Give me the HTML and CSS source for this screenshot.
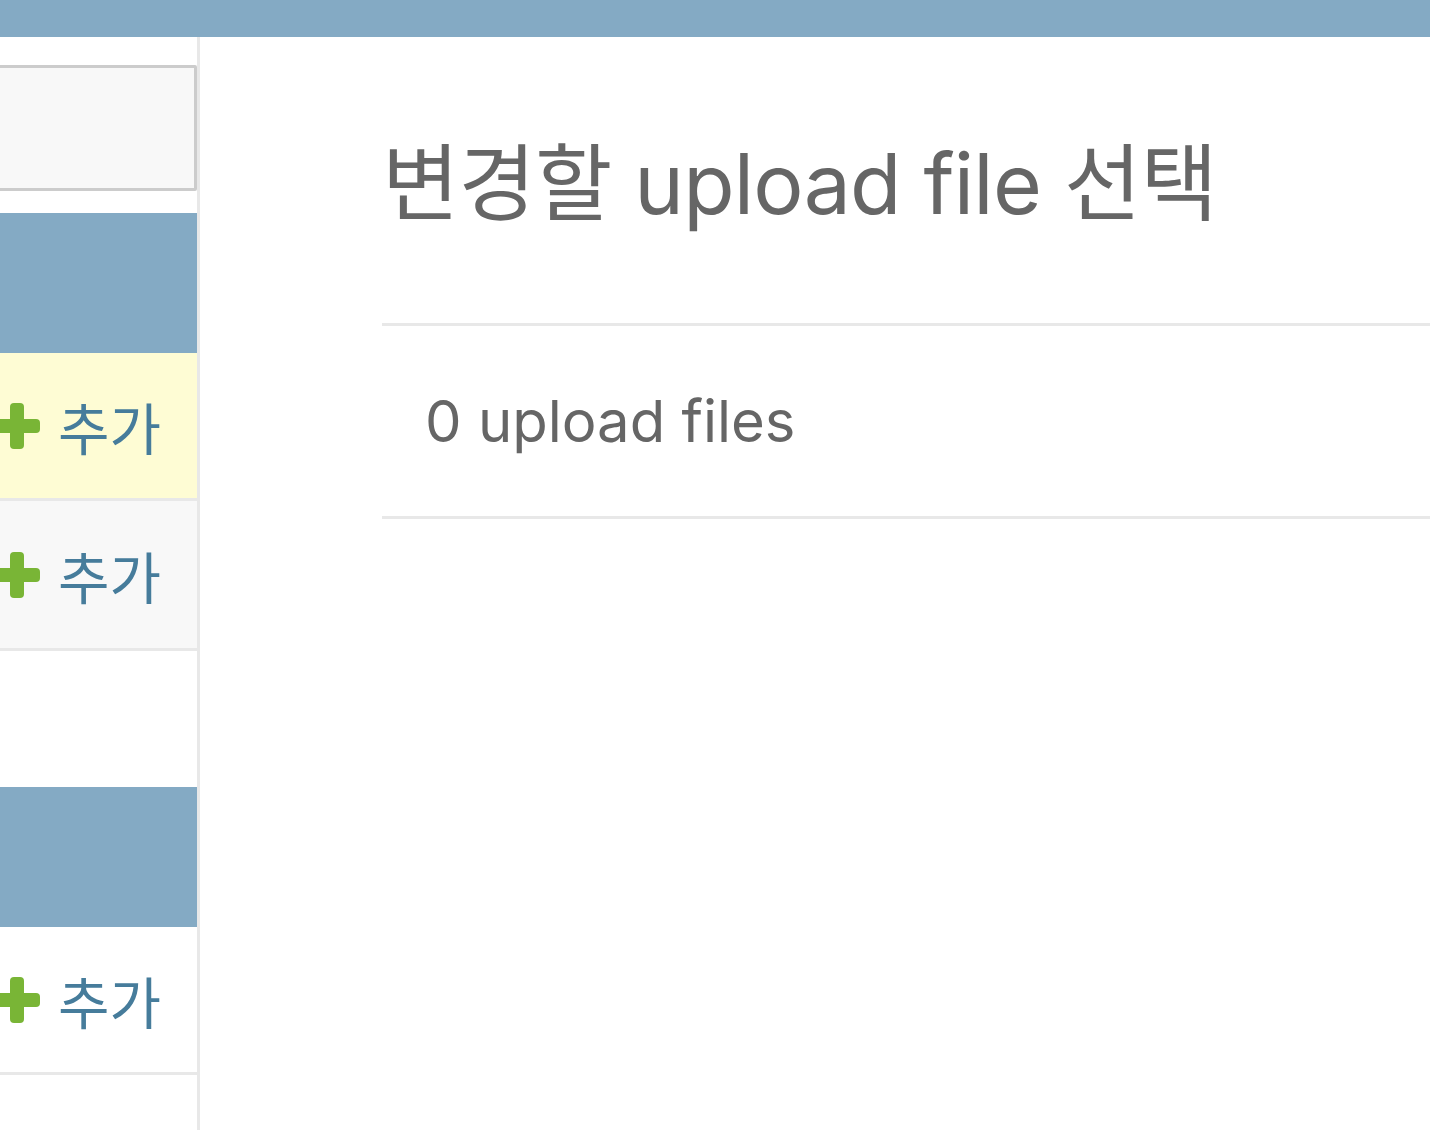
FILE: index.html
```html
<!DOCTYPE html>
<html lang="ko">
<head>
    <meta charset="UTF-8">
    <meta name="viewport" content="width=device-width, initial-scale=1.0">
    <title>변경할 upload file 선택</title>
    <link rel="stylesheet" href="styles.css">
</head>
<body>

    <div class="header"></div>

    <div class="main">
        <!-- Navigation sidebar -->
        <div class="sidebar">
            <input type="text" class="nav-filter">

            <div class="module">
                <div class="caption"></div>
                <div class="row current">
                    <svg class="plus" viewBox="0 0 46 46"><rect x="16" y="0" width="14" height="46" rx="4"/><rect x="0" y="16" width="46" height="14" rx="4"/></svg>
                    <a href="#">추가</a>
                </div>
                <div class="row alt">
                    <svg class="plus" viewBox="0 0 46 46"><rect x="16" y="0" width="14" height="46" rx="4"/><rect x="0" y="16" width="46" height="14" rx="4"/></svg>
                    <a href="#">추가</a>
                </div>
            </div>

            <div class="module">
                <div class="caption"></div>
                <div class="row">
                    <svg class="plus" viewBox="0 0 46 46"><rect x="16" y="0" width="14" height="46" rx="4"/><rect x="0" y="16" width="46" height="14" rx="4"/></svg>
                    <a href="#">추가</a>
                </div>
            </div>
        </div>

        <!-- Content -->
        <div class="content">
            <h1>변경할 upload file 선택</h1>
            <p class="paginator">0 upload files</p>
        </div>
    </div>

</body>
</html>
```

FILE: styles.css
```css
body {
    margin: 0;
    padding: 0;
    font-family: Inter, "Noto Sans CJK KR", sans-serif;
    color: #666;
    background: white;
    overflow: hidden;
}
.header {
    height: 37px;
    background: #84aac4;
}
.main {
    display: flex;
    height: 1093px;
}
.sidebar {
    width: 197px;
    flex-shrink: 0;
    border-right: 3px solid #e8e8e8;
    padding-top: 28px;
}
.nav-filter {
    display: block;
    box-sizing: border-box;
    width: 217px;
    height: 126px;
    margin: 0 0 22px -20px;
    background: #f8f8f8;
    border: 3px solid #cccccc;
    border-radius: 2px;
    padding: 0;
}
.module {
    margin-bottom: 136px;
}
.caption {
    height: 140px;
    background: #84aac4;
}
.row {
    display: flex;
    align-items: center;
    gap: 18px;
    height: 145px;
    border-bottom: 3px solid #e8e8e8;
    background: white;
}
.row.current {
    background: #fefcd4;
}
.row.alt {
    height: 147px;
    background: #f8f8f8;
}
.plus {
    width: 46px;
    height: 46px;
    margin-left: -6px;
    fill: #79b536;
    flex-shrink: 0;
}
.row a {
    font-family: "Noto Sans CJK KR", sans-serif;
    font-size: 56px;
    color: #467c9b;
    text-decoration: none;
    line-height: 1;
}
.content {
    flex: 1;
    padding-left: 182px;
}
h1 {
    font-size: 84px;
    font-weight: 400;
    line-height: 96px;
    letter-spacing: -0.8px;
    margin: 99px 0 91px 0;
    color: #666;
    white-space: nowrap;
}
.paginator {
    margin: 0;
    padding: 0 0 0 43px;
    height: 190px;
    line-height: 190px;
    font-size: 58px;
    border-top: 3px solid #e8e8e8;
    border-bottom: 3px solid #e8e8e8;
}
```
